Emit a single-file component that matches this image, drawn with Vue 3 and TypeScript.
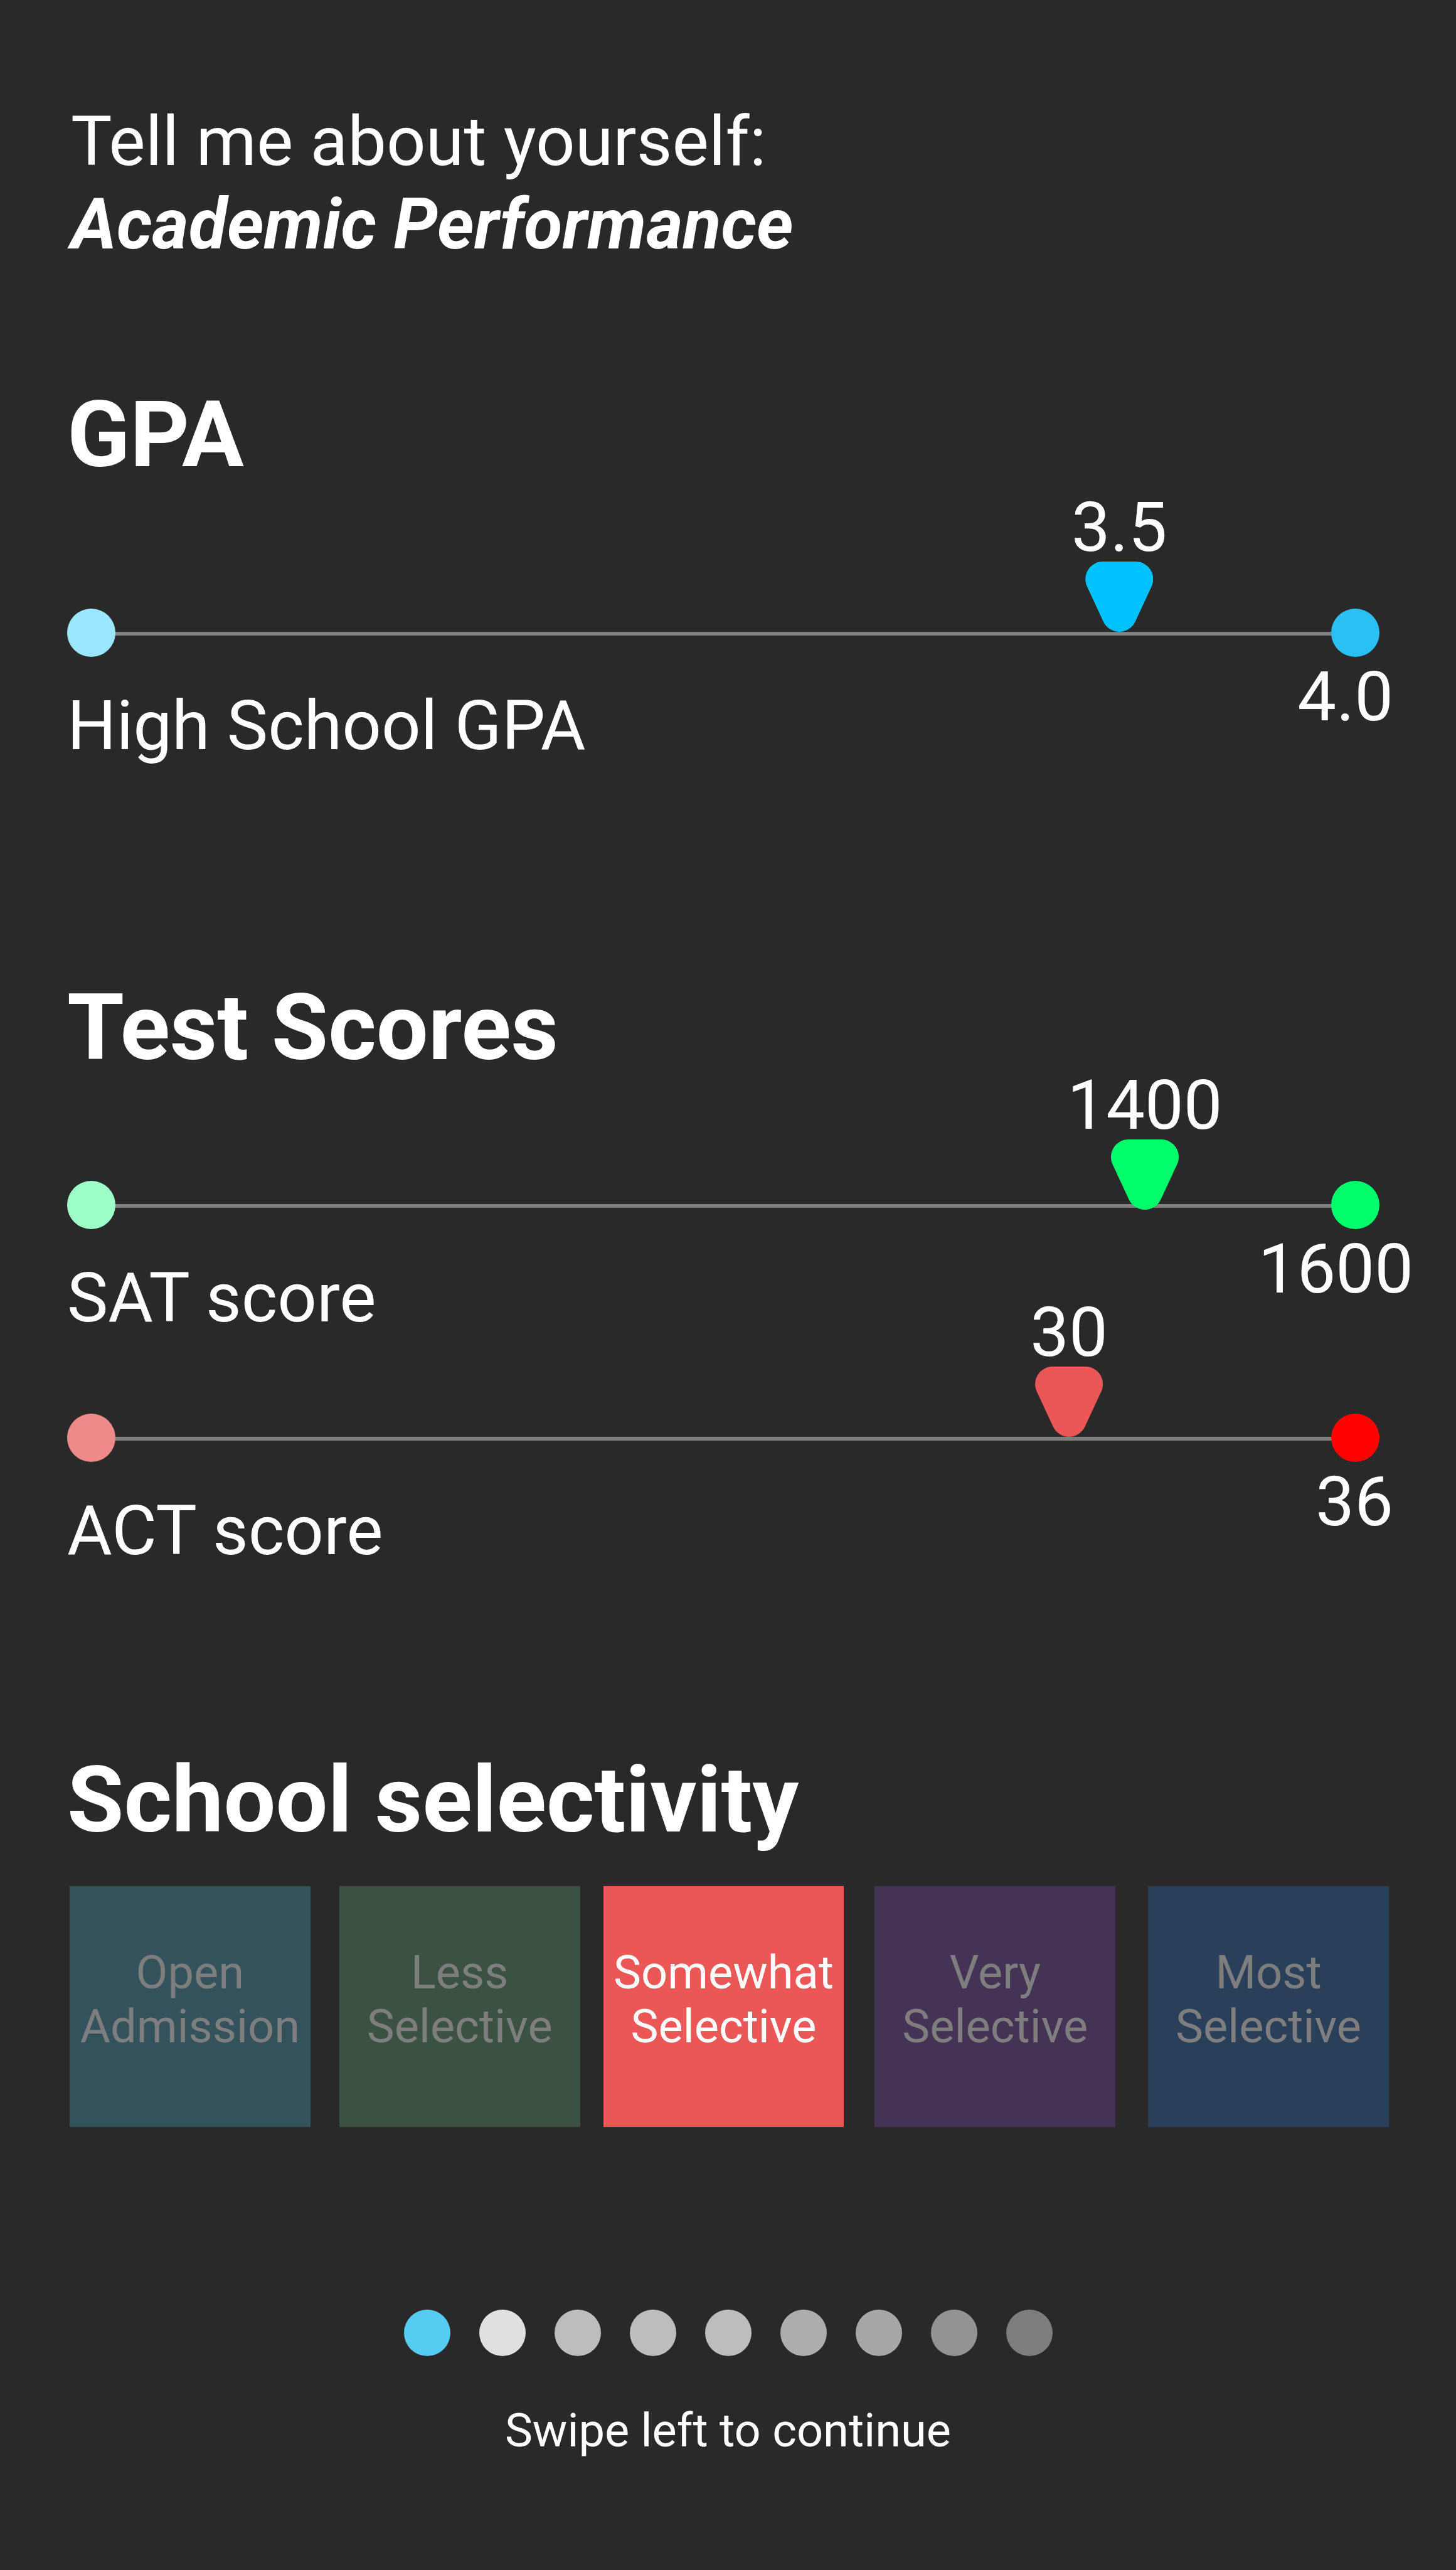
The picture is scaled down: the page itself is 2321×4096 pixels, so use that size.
<script setup lang="ts">
import { reactive, ref } from 'vue'

interface Score {
  id: string
  label: string
  value: number
  min: number
  max: number
  step: number
  digits: number
  start: string
  end: string
  thumb: string
  modifier?: string
}

const gpa = reactive<Score[]>([
  { id: 'gpa', label: 'High School GPA', value: 3.5, min: 1.25, max: 4, step: 0.05, digits: 1, start: '#9be7ff', end: '#2bc0f3', thumb: '#00c2ff' },
])

const tests = reactive<Score[]>([
  { id: 'sat', label: 'SAT score', value: 1400, min: 360, max: 1600, step: 10, digits: 0, start: '#9fffc9', end: '#00ff6a', thumb: '#00ff6a', modifier: 'slider--wide' },
  { id: 'act', label: 'ACT score', value: 30, min: 9, max: 36, step: 1, digits: 0, start: '#ee8b8a', end: '#ff0000', thumb: '#eb5757' },
])

const groups = [
  { title: 'GPA', name: 'gpa', scores: gpa },
  { title: 'Test Scores', name: 'tests', scores: tests },
]

const levels = [
  { first: 'Open', second: 'Admission', color: '#34525c' },
  { first: 'Less', second: 'Selective', color: '#3b5243' },
  { first: 'Somewhat', second: 'Selective', color: '#eb5757' },
  { first: 'Very', second: 'Selective', color: '#443355' },
  { first: 'Most', second: 'Selective', color: '#2a3f5a' },
]
const selected = ref(2)

const steps = ['#56ccf2', '#e0e0e0', '#bdbdbd', '#bdbdbd', '#bdbdbd', '#adadad', '#a7a7a7', '#939393', '#7d7d7d']

function sliderVars(s: Score) {
  return {
    '--ratio': (s.value - s.min) / (s.max - s.min),
    '--start': s.start,
    '--end': s.end,
    '--thumb': s.thumb,
  }
}
</script>

<template>
  <main class="screen">
    <h1 class="intro">
      <span>Tell me about yourself:</span>
      <em class="intro__topic">Academic Performance</em>
    </h1>

    <section v-for="g in groups" :key="g.name" class="group" :class="'group--' + g.name">
      <h2 class="title">{{ g.title }}</h2>
      <div class="sliders">
        <div v-for="s in g.scores" :key="s.id" class="slider" :class="s.modifier" :style="sliderVars(s)">
          <div class="rail">
            <span class="rail__dot rail__dot--start"></span>
            <span class="rail__line"></span>
            <span class="rail__dot rail__dot--end"></span>
            <input :id="s.id" v-model.number="s.value" class="range" type="range" :min="s.min" :max="s.max" :step="s.step" />
            <output class="value" :for="s.id">{{ s.value.toFixed(s.digits) }}</output>
          </div>
          <div class="caption">
            <label class="caption__label" :for="s.id">{{ s.label }}</label>
            <span class="caption__limit">{{ s.max.toFixed(s.digits) }}</span>
          </div>
        </div>
      </div>
    </section>

    <section class="group group--levels">
      <h2 class="title">School selectivity</h2>
      <div class="tiles">
        <button
          v-for="(l, i) in levels"
          :key="l.first"
          type="button"
          class="tile"
          :class="{ 'tile--on': i === selected }"
          :aria-pressed="i === selected"
          :style="{ backgroundColor: l.color }"
          @click="selected = i"
        >
          <span>{{ l.first }}</span>
          <span>{{ l.second }}</span>
        </button>
      </div>
    </section>

    <nav class="steps">
      <button v-for="(c, i) in steps" :key="i" type="button" class="step" :aria-label="'Step ' + (i + 1)" :style="{ backgroundColor: c }"></button>
    </nav>
    <p class="hint">Swipe left to continue</p>
  </main>
</template>

<style>
body {
  margin: 0;
  background: #292929;
}
</style>

<style scoped>
.screen {
  box-sizing: border-box;
  min-height: 100vh;
  padding: 160px 107px 176px;
  background: #292929;
  color: #ffffff;
  font-family: Roboto, "Liberation Sans", sans-serif;
  font-size: 110px;
  line-height: 132px;
  overflow: hidden;
}

.intro {
  display: flex;
  flex-direction: column;
  margin: 0;
  padding-left: 6px;
  font-size: inherit;
  font-weight: 400;
}

.intro__topic {
  font-size: 112px;
  font-style: italic;
  font-weight: 700;
}

.title {
  margin: 0;
  font-size: 147px;
  font-weight: 700;
  line-height: 172px;
}

.group--gpa {
  margin-top: 183px;
}

.group--tests {
  margin-top: 330px;
}

.group--levels {
  margin-top: 278px;
}

.sliders {
  display: flex;
  flex-direction: column;
  gap: 119px;
  margin: 158px 15px 0 0;
}

.group--gpa .sliders {
  margin-top: 191px;
}

.slider {
  --sink: 0px;
  --overhang: -22px;
}

/* Four-digit scores: the pin dips over the rail and the limit runs into the margin. */
.slider--wide {
  --sink: 9px;
  --overhang: -54px;
}

.rail {
  position: relative;
  display: flex;
  align-items: center;
  height: 77px;
}

.rail__dot {
  position: relative;
  z-index: 1;
  width: 77px;
  height: 77px;
  border-radius: 50%;
}

.rail__dot--start {
  background: var(--start);
}

.rail__dot--end {
  background: var(--end);
}

.rail__line {
  flex: 1;
  height: 6px;
  margin: 3px -2px 0;
  background: #7f7f7f;
}

.range {
  position: absolute;
  z-index: 2;
  top: calc(-75px + var(--sink));
  left: 0;
  width: 100%;
  height: 112px;
  margin: 0;
  appearance: none;
  background: transparent;
  cursor: pointer;
}

.range::-webkit-slider-runnable-track {
  height: 112px;
  background: transparent;
}

.range::-webkit-slider-thumb {
  appearance: none;
  width: 108px;
  height: 112px;
  border: 0;
  background: var(--thumb);
  clip-path: path("M28 0H80A28 28 0 0 1 105.4 39.8L79.4 95.8A28 28 0 0 1 28.6 95.8L2.6 39.8A28 28 0 0 1 28 0Z");
}

.value {
  position: absolute;
  top: calc(-195px + var(--sink));
  left: calc(54px + (100% - 108px) * var(--ratio));
  transform: translateX(-50%);
}

.caption {
  display: flex;
  align-items: flex-start;
  justify-content: space-between;
}

.caption__label {
  margin-top: 44px;
}

.caption__limit {
  margin: -2px var(--overhang) 0 0;
}

.caption {
  margin-bottom: -1px;
}

.tiles {
  display: flex;
  margin: 51px 0 0 4px;
}

.tile {
  display: flex;
  flex: 1;
  flex-direction: column;
  align-items: center;
  box-sizing: border-box;
  min-width: 0;
  aspect-ratio: 1;
  padding: 95px 0 0;
  border: 0;
  color: #7e7e7e;
  font-family: inherit;
  font-size: 74px;
  line-height: 86px;
  cursor: pointer;
}

.tile:nth-child(2) {
  margin-left: 46px;
}

.tile:nth-child(3) {
  margin-left: 37px;
}

.tile:nth-child(4) {
  margin-left: 49px;
}

.tile:nth-child(5) {
  margin-left: 52px;
}

.tile--on {
  color: #ffffff;
}

.steps {
  display: flex;
  justify-content: center;
  gap: 46px;
  margin-top: 291px;
}

.step {
  width: 74px;
  height: 74px;
  padding: 0;
  border: 0;
  border-radius: 50%;
  cursor: pointer;
}

.hint {
  margin: 76px 0 0;
  font-size: 74px;
  line-height: 86px;
  text-align: center;
}
</style>
